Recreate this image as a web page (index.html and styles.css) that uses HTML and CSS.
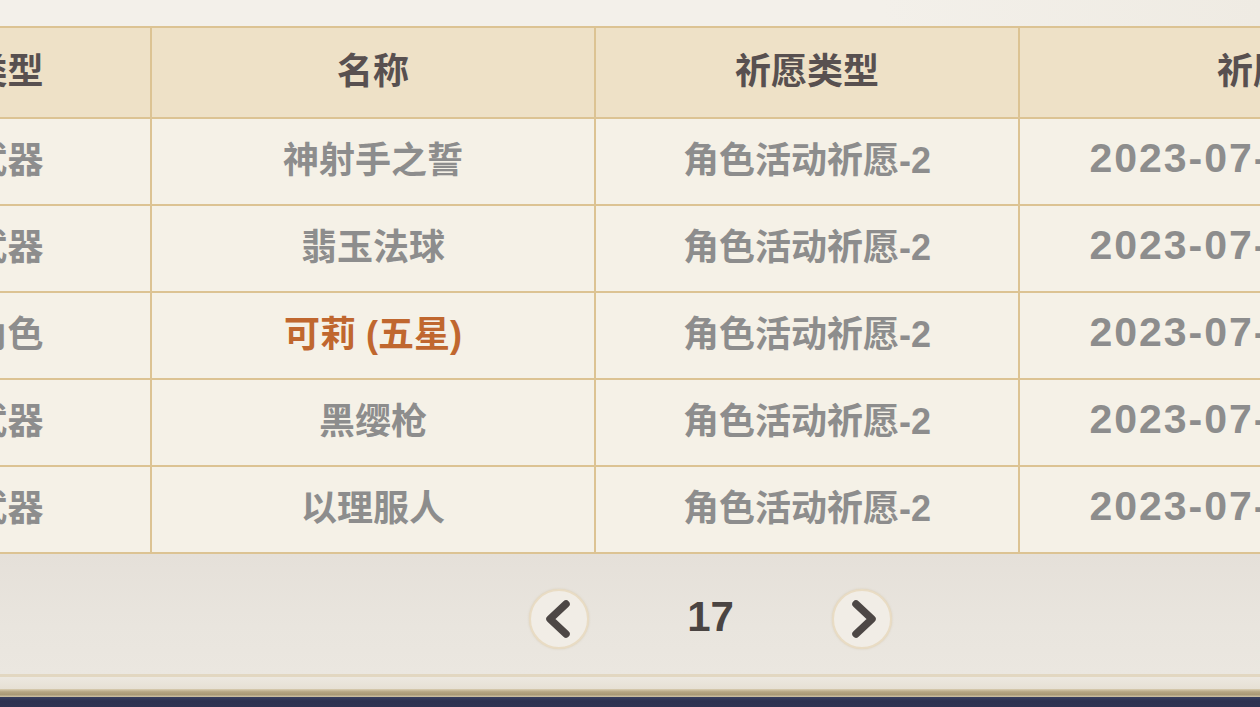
FILE: index.html
```html
<!DOCTYPE html>
<html lang="zh-CN">
<head>
<meta charset="utf-8">
<title>祈愿记录</title>
<link rel="stylesheet" href="styles.css">
</head>
<body>
<div class="page">
  <div class="top-strip"></div>
  <table class="wish-table">
    <colgroup>
      <col class="c-type">
      <col class="c-name">
      <col class="c-pool">
      <col class="c-time">
    </colgroup>
    <thead>
      <tr><th>类型</th><th>名称</th><th>祈愿类型</th><th>祈愿时间</th></tr>
    </thead>
    <tbody>
      <tr><td>武器</td><td>神射手之誓</td><td>角色活动祈愿-2</td><td class="date">2023-07-14 18:22:35</td></tr>
      <tr><td>武器</td><td>翡玉法球</td><td>角色活动祈愿-2</td><td class="date">2023-07-14 18:22:35</td></tr>
      <tr><td>角色</td><td class="five">可莉 (五星)</td><td>角色活动祈愿-2</td><td class="date">2023-07-14 18:22:35</td></tr>
      <tr><td>武器</td><td>黑缨枪</td><td>角色活动祈愿-2</td><td class="date">2023-07-14 18:22:35</td></tr>
      <tr><td>武器</td><td>以理服人</td><td>角色活动祈愿-2</td><td class="date">2023-07-14 18:22:35</td></tr>
    </tbody>
  </table>
  <div class="pager">
    <button class="pg-btn" aria-label="上一页">
      <svg viewBox="0 0 60 60" width="60" height="60"><path d="M37 15 L21 30 L37 45" fill="none" stroke="#4d4745" stroke-width="7.5" stroke-linecap="round" stroke-linejoin="round"/></svg>
    </button>
    <div class="pg-num">17</div>
    <button class="pg-btn" aria-label="下一页">
      <svg viewBox="0 0 60 60" width="60" height="60"><path d="M24 15 L40 30 L24 45" fill="none" stroke="#4d4745" stroke-width="7.5" stroke-linecap="round" stroke-linejoin="round"/></svg>
    </button>
  </div>
  <div class="book-edge">
    <div class="edge-line"></div>
    <div class="edge-gap"></div>
    <div class="edge-band"></div>
  </div>
  <div class="night"></div>
</div>
</body>
</html>
```

FILE: styles.css
```css
html, body {
  margin: 0;
  padding: 0;
  width: 1260px;
  height: 707px;
  overflow: hidden;
  background: #2e3352;
}

.page {
  width: 1260px;
  height: 707px;
  overflow: hidden;
  display: flex;
  flex-direction: column;
  background: #e9e5de;
  font-family: "Liberation Sans", "Noto Sans CJK SC", sans-serif;
  font-weight: 700;
}

.top-strip {
  height: 26px;
  flex: none;
  background: linear-gradient(90deg, #f3f0ea 0%, #f3f0ea 70%, #efebe3 100%);
}

.wish-table {
  flex: none;
  margin-left: -137px;
  border-collapse: collapse;
  table-layout: fixed;
  width: 1692px;
}

.c-type { width: 287px; }
.c-name { width: 444px; }
.c-pool { width: 424px; }
.c-time { width: 540px; }

.wish-table th,
.wish-table td {
  border: 2px solid #dcc393;
  padding: 0 0 10px 0;
  text-align: center;
  white-space: nowrap;
  overflow: hidden;
  font-size: 36px;
  font-weight: 700;
}

.wish-table thead tr { height: 91px; }
.wish-table tbody tr { height: 87px; }

.wish-table th {
  background: #eee1c7;
  color: #585050;
}

.wish-table td {
  background: #f5f1e7;
  color: #8d8d8d;
}

.wish-table td.five {
  color: #c0672f;
}

.wish-table td.date {
  font-size: 41px;
  letter-spacing: 2px;
  padding: 0 0 6px 24px;
}

.pager {
  flex: none;
  height: 120px;
  padding-left: 161px;
  display: flex;
  align-items: center;
  justify-content: center;
  gap: 60px;
  background: linear-gradient(180deg, #e5e0d9 0%, #e9e5de 60%, #ebe7e0 100%);
}

.pg-btn {
  width: 60px;
  height: 60px;
  padding: 0;
  border-radius: 50%;
  border: 2px solid #e9dcc4;
  background: #f1ede6;
  box-shadow: 0 0 2px rgba(200, 180, 140, 0.5);
  display: flex;
  align-items: center;
  justify-content: center;
  box-sizing: border-box;
  margin-top: 10px;
}

.pg-btn svg {
  display: block;
  flex: none;
}

.pg-num {
  width: 123px;
  text-align: center;
  font-size: 42px;
  color: #4a4442;
  line-height: 1;
  margin-top: 6px;
}

.book-edge {
  flex: none;
  display: flex;
  flex-direction: column;
  background: #ebe7df;
}

.edge-line {
  height: 3px;
  background: #e2d7c1;
}

.edge-gap {
  height: 12px;
  background: linear-gradient(180deg, #ece8e0, #e6e0d4);
}

.edge-band {
  height: 8px;
  background: linear-gradient(180deg, #d9cdb2 0%, #b5a583 35%, #a89876 70%, #cfc3a8 100%);
}

.night {
  flex: 1;
  background: linear-gradient(180deg, #3a4060 0%, #2c3150 40%, #2e3352 100%);
}
```
